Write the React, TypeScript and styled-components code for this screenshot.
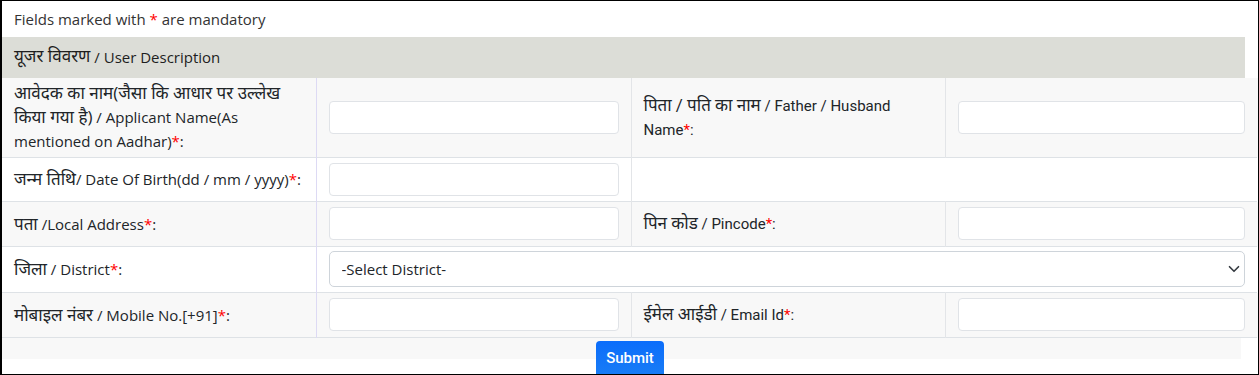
import React from "react";
import styled, { createGlobalStyle } from "styled-components";

const GlobalStyle = createGlobalStyle`
  html, body { margin: 0; padding: 0; background: #fff; }
  * { box-sizing: border-box; }
`;

const baseFont = `"Open Sans", "Noto Sans Devanagari", "Noto Sans", sans-serif`;
const narrowFont = `Roboto, "Noto Sans Devanagari", "Noto Sans", sans-serif`;

const Frame = styled.div`
  width: 1259px;
  height: 375px;
  border: 1px solid #000;
  border-left-width: 2px;
  overflow: hidden;
  background: #fff;
  font-family: ${baseFont};
  color: #212529;
`;

const Note = styled.div`
  height: 36px;
  display: flex;
  align-items: center;
  padding: 0 12px;
  font-size: 15px;
  color: #333;
`;

const Req = styled.span`
  color: #f00;
`;

const SectionHeader = styled.div`
  height: 41px;
  margin-right: 13px;
  display: flex;
  align-items: center;
  padding: 0 12px 2px;
  background: #dcddd7;
  font-size: 15px;
  color: #1e1e1e;
`;

const Table = styled.table`
  width: 100%;
  border-collapse: collapse;
  table-layout: fixed;
`;

const Row = styled.tr<{ $striped?: boolean }>`
  background: ${(p) => (p.$striped ? "#f8f8f8" : "#fff")};
  border-bottom: 1px solid #dee2e6;
`;

const Cell = styled.td<{ $divider?: "lavender" | "grey" | "none" }>`
  padding: 3px 12px 4px;
  vertical-align: middle;
  border-right: 1px solid
    ${(p) =>
      p.$divider === "lavender"
        ? "#dddaf4"
        : p.$divider === "none"
        ? "transparent"
        : "#e3e5e8"};
`;

const Label = styled.span<{ $narrow?: boolean }>`
  display: block;
  font-family: ${(p) => (p.$narrow ? narrowFont : baseFont)};
  font-size: 15px;
  line-height: 24px;
  color: #212529;
`;

const Hi = styled.span`
  font-size: 17px;
`;

const Input = styled.input<{ $tight?: boolean }>`
  display: block;
  width: 100%;
  height: 33px;
  margin: ${(p) => (p.$tight ? "2px 0 1px" : "2px 0")};
  border: 1px solid #e0e3e7;
  border-radius: 4px;
  background: #fff;
  padding: 0 12px;
  font-family: ${baseFont};
  font-size: 15px;
  outline: none;
`;

const SelectWrap = styled.div`
  position: relative;
  margin: 1px 0;
`;

const Select = styled.select`
  display: block;
  width: 100%;
  height: 36px;
  border: 1px solid #ced4da;
  border-radius: 5px;
  background: #fff;
  padding: 0 12px;
  font-family: ${baseFont};
  font-size: 15px;
  color: #212529;
  appearance: none;
  outline: none;
`;

const Chevron = styled.svg`
  position: absolute;
  right: 5px;
  top: 50%;
  transform: translateY(-50%);
  pointer-events: none;
`;

const Footer = styled.div`
  display: flex;
  justify-content: center;
  padding-top: 3px;
  background: linear-gradient(#f8f8f8, #f8f8f8) no-repeat 0 0 / calc(100% - 17px) 21px;
`;

const SubmitButton = styled.button`
  height: 38px;
  padding: 0 10px 4px;
  border: none;
  border-radius: 4px;
  background: linear-gradient(#0b6dfb, #1a7ef5);
  color: #fff;
  font-family: Roboto, sans-serif;
  font-size: 15px;
  font-weight: 500;
  cursor: pointer;
`;

const Star = () => <Req>*</Req>;

export default function App() {
  return (
    <>
      <GlobalStyle />
      <Frame>
        <Note>
          Fields marked with&nbsp;<Req>*</Req>&nbsp;are mandatory
        </Note>
        <SectionHeader>
          <Hi>यूजर विवरण</Hi>&nbsp;/ User Description
        </SectionHeader>
        <Table>
          <colgroup>
            <col style={{ width: 314 }} />
            <col style={{ width: 315 }} />
            <col style={{ width: 314 }} />
            <col />
          </colgroup>
          <tbody>
            <Row $striped>
              <Cell $divider="lavender">
                <Label>
                  <Hi>आवेदक का नाम(जैसा कि आधार पर उल्लेख किया गया है)</Hi> / Applicant
                  Name(As mentioned on Aadhar)<Star />:
                </Label>
              </Cell>
              <Cell>
                <Input type="text" />
              </Cell>
              <Cell>
                <Label $narrow>
                  <Hi>पिता / पति का नाम</Hi> / Father / Husband Name<Star />:
                </Label>
              </Cell>
              <Cell $divider="none">
                <Input type="text" />
              </Cell>
            </Row>
            <Row>
              <Cell $divider="lavender">
                <Label>
                  <Hi>जन्म तिथि</Hi>/ Date Of Birth(dd / mm / yyyy)<Star />:
                </Label>
              </Cell>
              <Cell>
                <Input type="text" $tight />
              </Cell>
              <Cell colSpan={2} $divider="none" />
            </Row>
            <Row $striped>
              <Cell $divider="lavender">
                <Label>
                  <Hi>पता</Hi> /Local Address<Star />:
                </Label>
              </Cell>
              <Cell>
                <Input type="text" />
              </Cell>
              <Cell>
                <Label $narrow>
                  <Hi>पिन कोड</Hi> / Pincode<Star />:
                </Label>
              </Cell>
              <Cell $divider="none">
                <Input type="text" />
              </Cell>
            </Row>
            <Row>
              <Cell $divider="lavender">
                <Label>
                  <Hi>जिला</Hi> / District<Star />:
                </Label>
              </Cell>
              <Cell colSpan={3} $divider="none">
                <SelectWrap>
                  <Select defaultValue="">
                    <option value="">-Select District-</option>
                  </Select>
                  <Chevron width="12" height="12" viewBox="0 0 16 16">
                    <path
                      d="M2 5l6 6 6-6"
                      fill="none"
                      stroke="#343a40"
                      strokeWidth="2.2"
                      strokeLinecap="round"
                      strokeLinejoin="round"
                    />
                  </Chevron>
                </SelectWrap>
              </Cell>
            </Row>
            <Row $striped>
              <Cell $divider="lavender">
                <Label>
                  <Hi>मोबाइल नंबर</Hi> / Mobile No.[+91]<Star />:
                </Label>
              </Cell>
              <Cell>
                <Input type="text" />
              </Cell>
              <Cell>
                <Label $narrow>
                  <Hi>ईमेल आईडी</Hi> / Email Id<Star />:
                </Label>
              </Cell>
              <Cell $divider="none">
                <Input type="text" />
              </Cell>
            </Row>
          </tbody>
        </Table>
        <Footer>
          <SubmitButton type="button">Submit</SubmitButton>
        </Footer>
      </Frame>
    </>
  );
}
